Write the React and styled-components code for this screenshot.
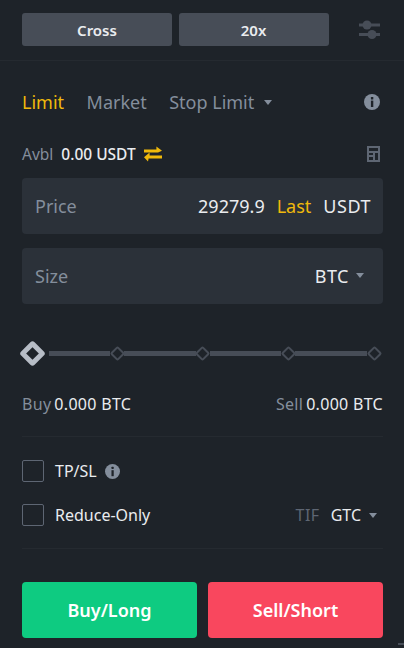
import styled, { createGlobalStyle } from "styled-components";

const GlobalStyle = createGlobalStyle`
  html, body {
    margin: 0;
    padding: 0;
    background: #1e2329;
  }
  body {
    font-family: "Noto Sans", "Liberation Sans", sans-serif;
    overflow: hidden;
  }
`;

const InfoIcon = ({ size }) => (
  <svg width={size} height={size} viewBox="0 0 16 16">
    <circle cx="8" cy="8" r="8" fill="#848e9c" />
    <rect x="6.9" y="3" width="2.4" height="2.4" rx="0.5" fill="#1e2329" />
    <rect x="6.9" y="6.6" width="2.4" height="6.4" fill="#1e2329" />
  </svg>
);

const SlidersIcon = () => (
  <svg width="22" height="20" viewBox="0 0 22 20" fill="#474d57">
    <rect x="0" y="3.5" width="21" height="3" />
    <circle cx="8" cy="5" r="4.5" />
    <rect x="0" y="13" width="21" height="3" />
    <circle cx="13" cy="14.5" r="4.5" />
  </svg>
);

const SwapIcon = () => (
  <svg width="18" height="16" viewBox="0 0 18 16" fill="#f0b90b">
    <path d="M0 3.6h12.4V0.6L18 4.8l-4 1.6H0z" />
    <path d="M18 9.6H5.6v-3L0 11.2l4 4.2.6-2.8H18z" />
  </svg>
);

const CalcIcon = () => (
  <svg width="13" height="16" viewBox="0 0 13 16" fill="#5e6673">
    <path
      fillRule="evenodd"
      d="M0 0h13v16H0zM2 2v3h9V2zM2 7v2h4V7zM8 7v7h3V7zM2 11v3h4v-3z"
    />
  </svg>
);

const App = () => {
  return (
    <Page>
      <GlobalStyle />
      <TopBar>
        <MarginButton>Cross</MarginButton>
        <MarginButton>20x</MarginButton>
        <SettingsSlot>
          <SlidersIcon />
        </SettingsSlot>
      </TopBar>
      <Content>
        <Tabs>
          <Tab $active>Limit</Tab>
          <Tab>Market</Tab>
          <Tab>
            Stop Limit
            <Caret />
          </Tab>
          <TabInfo>
            <InfoIcon size={16} />
          </TabInfo>
        </Tabs>
        <AvblRow>
          <AvblLabel>Avbl</AvblLabel>
          <Value>0.00 USDT</Value>
          <SwapIcon />
          <CalcSlot>
            <CalcIcon />
          </CalcSlot>
        </AvblRow>
        <Field>
          <FieldLabel>Price</FieldLabel>
          <FieldValue>29279.9</FieldValue>
          <LastTag>Last</LastTag>
          <FieldValue $unit>USDT</FieldValue>
        </Field>
        <Field $select>
          <FieldLabel>Size</FieldLabel>
          <FieldValue $unit>BTC</FieldValue>
          <Caret />
        </Field>
        <Slider>
          <Thumb />
          {[0, 1, 2, 3].map((i) => (
            <SliderStep key={i}>
              <Track />
              <Tick />
            </SliderStep>
          ))}
        </Slider>
        <CostRow>
          <CostItem>
            <CostLabel>Buy</CostLabel>
            <CostValue>0.000 BTC</CostValue>
          </CostItem>
          <CostItem>
            <CostLabel>Sell</CostLabel>
            <CostValue>0.000 BTC</CostValue>
          </CostItem>
        </CostRow>
        <Divider />
        <OptionRow>
          <CheckBox />
          <OptionLabel>TP/SL</OptionLabel>
          <InfoIcon size={15} />
        </OptionRow>
        <OptionRow $tight>
          <CheckBox />
          <OptionLabel>Reduce-Only</OptionLabel>
          <TifLabel>TIF</TifLabel>
          <TifValue>GTC</TifValue>
          <Caret />
          <TifEnd />
        </OptionRow>
        <Divider />
        <Actions>
          <ActionButton $color="#0ecb81">Buy/Long</ActionButton>
          <ActionButton $color="#f9475e">Sell/Short</ActionButton>
        </Actions>
      </Content>
      <NextPanelEdge />
    </Page>
  );
};

export default App;

const Page = styled.div`
  position: relative;
  width: 404px;
  height: 648px;
  background: #1e2329;
  overflow: hidden;
`;

const NextPanelEdge = styled.div`
  position: absolute;
  right: 0;
  bottom: 3px;
  width: 6px;
  height: 2px;
  background: #474d57;
`;

const TopBar = styled.div`
  display: flex;
  align-items: center;
  gap: 6.5px;
  height: 33px;
  padding: 13px 22px 14px;
  border-bottom: 1px solid #252a30;
`;

const MarginButton = styled.div`
  width: 150px;
  height: 33px;
  display: flex;
  align-items: center;
  justify-content: center;
  border-radius: 3px;
  background: #474d57;
  color: #eaecef;
  font-size: 15px;
  font-weight: 600;
`;

const SettingsSlot = styled.div`
  display: flex;
  margin-left: 24px;
`;

const Content = styled.div`
  padding: 0 21px 0 22px;
`;

const Tabs = styled.div`
  display: flex;
  align-items: center;
  gap: 22.5px;
  height: 26px;
  margin-top: 28px;
`;

const Tab = styled.div`
  display: flex;
  align-items: center;
  gap: 10px;
  color: ${(p) => (p.$active ? "#f0b90b" : "#848e9c")};
  font-size: 18px;
`;

const TabInfo = styled.div`
  display: flex;
  margin-left: auto;
  margin-right: 3px;
`;

const Caret = styled.span`
  flex: none;
  width: 0;
  height: 0;
  border-left: 4px solid transparent;
  border-right: 4px solid transparent;
  border-top: 5px solid #848e9c;
`;

const AvblRow = styled.div`
  display: flex;
  align-items: center;
  gap: 8px;
  height: 20px;
  margin-top: 29px;
`;

const AvblLabel = styled.span`
  color: #848e9c;
  font-size: 15.5px;
`;

const Value = styled.span`
  color: #eaecef;
  font-size: 15.5px;
  font-weight: 500;
`;

const CalcSlot = styled.div`
  display: flex;
  margin-left: auto;
  margin-right: 3px;
`;

const Field = styled.div`
  display: flex;
  align-items: center;
  gap: ${(p) => (p.$select ? "7px" : "12px")};
  height: 56px;
  margin-top: ${(p) => (p.$select ? "13.5px" : "14px")};
  padding: 0 ${(p) => (p.$select ? "19px" : "12px")} 0 13px;
  border-radius: 4px;
  background: #2b3139;
`;

const FieldLabel = styled.span`
  margin-right: auto;
  color: #848e9c;
  font-size: 18px;
`;

const FieldValue = styled.span`
  color: #eaecef;
  font-size: 18px;
  letter-spacing: ${(p) => (p.$unit ? "0.5px" : "0")};
`;

const LastTag = styled.span`
  color: #f0b90b;
  font-size: 18px;
`;

const Slider = styled.div`
  display: flex;
  align-items: center;
  height: 28px;
  margin-top: 35.5px;
  padding-right: 2px;
`;

const Thumb = styled.span`
  flex: none;
  width: 19px;
  height: 19px;
  margin: 0 7px 0 0.5px;
  box-sizing: border-box;
  border: 5px solid #b7bdc6;
  border-radius: 3px;
  background: #1e2329;
  transform: rotate(45deg);
`;

const SliderStep = styled.div`
  flex: 1;
  display: flex;
  align-items: center;

  &:nth-child(2) {
    flex: none;
    width: 75.5px;
  }
`;

const Track = styled.span`
  flex: 1;
  height: 5px;
  background: #474d57;
`;

const Tick = styled.span`
  flex: none;
  width: 11px;
  height: 11px;
  margin: 0 1.5px;
  box-sizing: border-box;
  border: 2px solid #474d57;
  border-radius: 2px;
  background: #1e2329;
  transform: rotate(45deg);
`;

const CostRow = styled.div`
  display: flex;
  justify-content: space-between;
  height: 20px;
  margin-top: 27px;
`;

const CostItem = styled.div`
  display: flex;
  align-items: center;
  gap: 3px;
`;

const CostLabel = styled.span`
  color: #848e9c;
  font-size: 16px;
  letter-spacing: 0.3px;
`;

const CostValue = styled.span`
  color: #eaecef;
  font-size: 16px;
  letter-spacing: 0.3px;
`;

const Divider = styled.div`
  height: 1px;
  margin-top: 22px;
  background: #252a30;
`;

const OptionRow = styled.div`
  display: flex;
  align-items: center;
  height: 22px;
  margin-top: ${(p) => (p.$tight ? "22px" : "23px")};
`;

const CheckBox = styled.span`
  flex: none;
  width: 22px;
  height: 22px;
  box-sizing: border-box;
  border: 1px solid #5e6673;
  border-radius: 2px;
  margin-right: 11px;
`;

const OptionLabel = styled.span`
  margin-right: 8px;
  color: #eaecef;
  font-size: 16px;
`;

const TifLabel = styled.span`
  margin-left: auto;
  margin-right: 11px;
  color: #5e6673;
  font-size: 16px;
  letter-spacing: 0.5px;
`;

const TifValue = styled.span`
  margin-right: 8px;
  color: #eaecef;
  font-size: 16px;
`;

const TifEnd = styled.span`
  flex: none;
  width: 6px;
`;

const Actions = styled.div`
  display: flex;
  gap: 11px;
  margin-top: 33px;
`;

const ActionButton = styled.div`
  flex: 1;
  height: 56px;
  display: flex;
  align-items: center;
  justify-content: center;
  border-radius: 4px;
  background: ${(p) => p.$color};
  color: #fff;
  font-size: 18px;
  font-weight: 600;
`;
